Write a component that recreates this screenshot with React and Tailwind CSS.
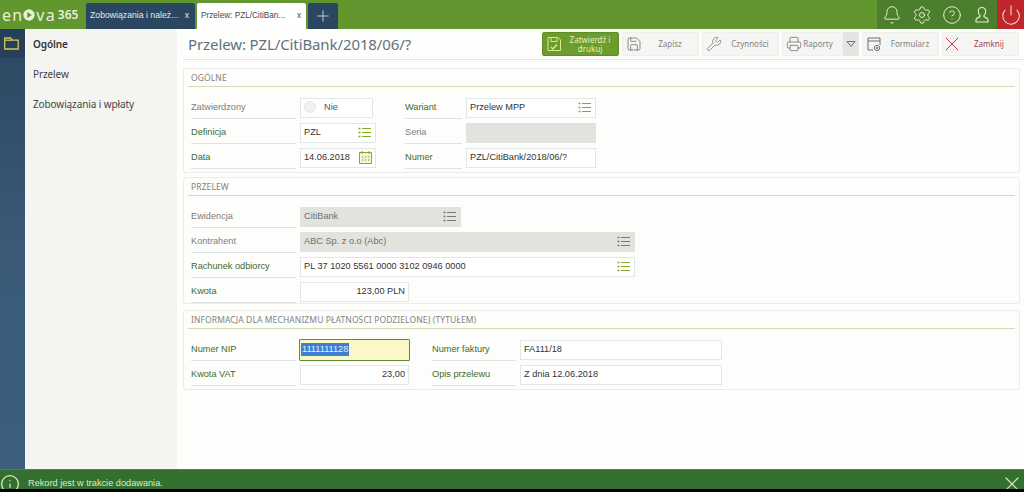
import React from 'react';
import { Bell, Settings, CircleHelp, Power, Plus, Save, Wrench, Printer, X, Info } from 'lucide-react';

const labelGreen = 'text-[#3d6b2c]';
const labelGray = 'text-[#7d7f7b]';

const ListIcon = ({ gray }) => (
    <svg width="13" height="11" viewBox="0 0 13 11" fill="none" stroke={gray ? '#777' : '#84a82a'} strokeWidth="1.2" className="shrink-0 mr-[1px]">
        <path d="M4 1.5h9M4 5.5h9M4 9.5h9" />
        <path d="M0.5 1.5h2M0.5 5.5h2M0.5 9.5h2" strokeWidth="1.6" />
    </svg>
);

const CalendarIcon = () => (
    <svg width="13" height="13" viewBox="0 0 13 13" fill="#f3f7dc" stroke="#84a82a" className="shrink-0">
        <path d="M0.5 1.5h12v11h-12z" />
        <path d="M3 0v3M10 0v3" />
        <path d="M3 6h1.5M6 6h1.5M9 6h1.5M3 9h1.5M6 9h1.5M9 9h1.5" />
    </svg>
);

const Field = ({ label, required, labelWidth = 'w-[105px]', inputWidth, tone = 'white', icon, right, children }) => (
    <>
        <div className={`${labelWidth} h-[23px] pt-[2px] border-b border-[#dbe3e6] flex items-center text-[9.2px] ${required ? labelGreen : labelGray}`}>
            {label}
        </div>
        <div className={`${inputWidth} ml-1 h-[20px] flex items-center justify-between px-[3px] text-[9.2px] border ${tone === 'gray' ? 'bg-[#e2e2df] border-[#e2e2df] text-[#6f716d]' : 'bg-white border-[#e1e7e6] text-[#333]'} ${right ? 'justify-end' : ''}`}>
            <span className="truncate">{children}</span>
            {icon === 'list' && <ListIcon gray={tone === 'gray'} />}
            {icon === 'calendar' && <CalendarIcon />}
        </div>
    </>
);

const Row = ({ children }) => <div className="h-[25px] flex items-center">{children}</div>;

const Section = ({ title, className, children }) => (
    <section className={`${className} mr-[4px] border border-[#ececea] rounded-[2px] bg-[#fdfdfb] px-[4px]`}>
        <div className="h-[18px] pt-[2px] border-b border-[#d3deb4] pl-[3px] flex items-center text-[8.5px] tracking-[0.1px] text-[#828480]" style={{ fontFamily: '"Noto Sans", sans-serif' }}>
            {title}
        </div>
        <div className="pt-[8px] pl-[3px]">{children}</div>
    </section>
);

const ToolButton = ({ icon, label, className = 'w-[77px] pl-[3px]', labelClass = 'text-[#808280]' }) => (
    <button className={`${className} h-[24px] bg-[#f5f5f3] border border-[#efefec] rounded-[2px] flex items-center`}>
        {icon}
        <span className={`flex-1 text-center text-[8px] ${labelClass}`}>{label}</span>
    </button>
);

const TopIcon = ({ children, className = 'w-[30px] bg-[#4b7f2d]' }) => (
    <div className={`${className} h-[29px] flex items-center justify-center text-[#e3efca]`}>{children}</div>
);

const FormIcon = () => (
    <svg width="16" height="16" viewBox="0 0 16 16" fill="none" stroke="#6b6e72" strokeWidth="1">
        <path d="M7 14H2V2h12v7" />
        <path d="M2 5h12" />
        <circle cx="11" cy="12" r="2.6" />
        <circle cx="11" cy="12" r="0.7" />
    </svg>
);

const ConfirmIcon = () => (
    <svg width="16" height="16" viewBox="0 0 16 16" fill="none" stroke="#dbe98a" strokeWidth="1">
        <path d="M2 1.5h10l2.5 2.5v10.5H2z" />
        <path d="M5 1.5v4h6v-4" />
        <path d="M5 11l2 2 4-4.5" strokeWidth="1.3" />
    </svg>
);

const FolderIcon = () => (
    <svg width="15" height="13" viewBox="0 0 15 13" fill="none" stroke="#d4c75a" strokeWidth="1.3">
        <path d="M0.7 12V1h6l1.5 2.2h6V12z" />
        <path d="M0.7 3.2h7.5" />
    </svg>
);

const UserIcon = () => (
    <svg width="18" height="18" viewBox="0 0 18 18" fill="none" stroke="currentColor" strokeWidth="1.1">
        <path d="M9 1.5c-2.4 0-3.7 1.7-3.7 4 0 1.7.7 3 1.7 3.9v1.4c-1.700.7-4 1.200-4 3.200v2h12v-2c0-2-2.300-2.500-4-3.200V9.400c1-.9 1.700-2.200 1.700-3.900 0-2.300-1.300-4-3.700-4z" />
    </svg>
);

const Logo = () => (
    <div className="w-[86px] pl-[2px] flex items-center text-[#e8f0d8] text-[16px] tracking-[1.2px]" style={{ fontFamily: '"Noto Sans", sans-serif' }}>
        <span>en</span>
        <svg width="12" height="12" viewBox="0 0 14 14" className="mr-[1px]">
            <circle cx="7" cy="7" r="6.6" fill="#e8f0d8" />
            <path d="M5 3.6L10.4 7 5 10.4z" fill="#5f9431" />
        </svg>
        <span>va</span>
        <span className="ml-[2px] text-[12px] font-semibold tracking-normal">365</span>
    </div>
);

export default function App() {
    return (
        <div className="h-screen w-full overflow-hidden flex flex-col bg-black" style={{ fontFamily: '"Liberation Sans", Arial, sans-serif' }}>
            {/* Top bar */}
            <header className="h-[29px] shrink-0 bg-[#62962f] flex items-end">
                <div className="h-[29px] flex items-center"><Logo /></div>
                <div className="w-[109px] h-[26px] bg-[#2b4660] rounded-t-[2px] flex items-center justify-between pl-[4px] pr-[6px] text-[8.7px] text-[#e4e9ee]">
                    <span>Zobowiązania i należ...</span><span>x</span>
                </div>
                <div className="ml-[2px] w-[109px] h-[26px] bg-white rounded-t-[2px] flex items-center justify-between pl-[4px] pr-[5px] text-[8.2px] text-[#3d4a55]">
                    <span>Przelew: PZL/CitiBan...</span><span>x</span>
                </div>
                <div className="ml-[2px] w-[30px] h-[26px] bg-[#2b4660] rounded-t-[2px] flex items-center justify-center text-[#cdd6de]">
                    <Plus size={18} strokeWidth={1.2} />
                </div>
                <div className="ml-auto flex">
                    <TopIcon><Bell size={20} strokeWidth={1.2} /></TopIcon>
                    <TopIcon><Settings size={20} strokeWidth={1.2} /></TopIcon>
                    <TopIcon><CircleHelp size={20} strokeWidth={1.2} /></TopIcon>
                    <TopIcon><UserIcon /></TopIcon>
                    <TopIcon className="w-[27px] bg-[#c0252b]"><Power size={22} strokeWidth={1.1} /></TopIcon>
                </div>
            </header>

            <div className="flex-1 min-h-0 flex">
                {/* Icon rail */}
                <div className="w-[25px] shrink-0 bg-gradient-to-b from-[#2c4761] via-[#3a5a78] to-[#3c5f7d]">
                    <div className="h-[29px] bg-[#27405a] flex items-center justify-center pr-[3px]">
                        <FolderIcon />
                    </div>
                </div>

                {/* Menu */}
                <nav className="w-[152px] shrink-0 bg-[#f4f4f1] pl-[8px] text-[10px] tracking-[-0.1px] text-[#444]" style={{ fontFamily: '"Noto Sans", sans-serif' }}>
                    <div className="h-[30px] flex items-center font-semibold text-[#333]">Ogólne</div>
                    <div className="h-[30px] flex items-center">Przelew</div>
                    <div className="h-[30px] flex items-center">Zobowiązania i wpłaty</div>
                </nav>

                {/* Form */}
                <main className="flex-1 bg-[#fefefc] pl-[6px]">
                    <div className="h-[31px] border-b border-[#e4e4e1] flex items-center justify-between pr-[5px]">
                        <h1 className="pl-[5px] text-[15px] tracking-[-0.1px] text-[#5f7280]" style={{ fontFamily: '"Noto Sans", sans-serif' }}>Przelew: PZL/CitiBank/2018/06/?</h1>
                        <div className="flex items-center gap-[3px]" style={{ fontFamily: '"Noto Sans", sans-serif' }}>
                            <button className="w-[77px] h-[24px] bg-[#6c9c2c] border border-[#5d8c28] rounded-[2px] flex items-center pl-[3px]">
                                <ConfirmIcon />
                                <span className="flex-1 text-center text-[8px] leading-[9px] text-[#e6f0b8]">Zatwierdź i drukuj</span>
                            </button>
                            <ToolButton icon={<Save size={16} strokeWidth={1} className="text-[#555]" />} label="Zapisz" />
                            <ToolButton icon={<Wrench size={16} strokeWidth={1} className="text-[#666]" />} label="Czynności" />
                            <div className="flex">
                                <ToolButton className="w-[61px] pl-[3px]" icon={<Printer size={16} strokeWidth={1.1} className="text-[#666]" />} label="Raporty" labelClass="text-[#808280] pr-[8px]" />
                                <div className="w-[16px] h-[24px] bg-[#e4e5e3] flex items-center justify-center">
                                    <svg width="10" height="8" viewBox="0 0 10 8" fill="none" stroke="#6b7276"><path d="M1 1.500h8L5 6.500z" /></svg>
                                </div>
                            </div>
                            <ToolButton icon={<FormIcon />} label="Formularz" />
                            <ToolButton className="w-[77px]" icon={<X size={24} strokeWidth={1} className="text-[#c8323a] -ml-[3px]" />} label="Zamknij" labelClass="text-[#a8444a] pr-[4px]" />
                        </div>
                    </div>

                    <Section title="OGÓLNE" className="mt-[8px] h-[105px]">
                        <Row>
                            <Field label="Zatwierdzony" inputWidth="w-[73px]">
                                <span className="flex items-center gap-[8px] text-[#555]">
                                    <span className="w-[12px] h-[12px] rounded-full bg-[#f1f1ef] border border-[#e6e6e4]" />Nie
                                </span>
                            </Field>
                            <div className="w-[32px]" />
                            <Field label="Wariant" required labelWidth="w-[57px]" inputWidth="w-[130px]" icon="list">Przelew MPP</Field>
                        </Row>
                        <Row>
                            <Field label="Definicja" required inputWidth="w-[76px]" icon="list">PZL</Field>
                            <div className="w-[29px]" />
                            <Field label="Seria" labelWidth="w-[57px]" inputWidth="w-[130px]" tone="gray" />
                        </Row>
                        <Row>
                            <Field label="Data" required inputWidth="w-[76px]" icon="calendar">14.06.2018</Field>
                            <div className="w-[29px]" />
                            <Field label="Numer" required labelWidth="w-[57px]" inputWidth="w-[130px]">PZL/CitiBank/2018/06/?</Field>
                        </Row>
                    </Section>

                    <Section title="PRZELEW" className="mt-[4px] h-[127px]">
                        <Row><Field label="Ewidencja" inputWidth="w-[161px]" tone="gray" icon="list">CitiBank</Field></Row>
                        <Row><Field label="Kontrahent" inputWidth="w-[335px]" tone="gray" icon="list">ABC Sp. z o.o (Abc)</Field></Row>
                        <Row><Field label="Rachunek odbiorcy" required inputWidth="w-[335px]" icon="list">PL 37 1020 5561 0000 3102 0946 0000</Field></Row>
                        <Row><Field label="Kwota" required inputWidth="w-[109px]" right>123,00 PLN</Field></Row>
                    </Section>

                    <Section title="INFORMACJA DLA MECHANIZMU PŁATNOŚCI PODZIELONEJ (TYTUŁEM)" className="mt-[6px] h-[80px]">
                        <Row>
                            <div className="w-[105px] h-[23px] pt-[2px] border-b border-[#dbe3e6] flex items-center text-[9.2px] text-[#3d6b2c]">Numer NIP</div>
                            <div className="ml-[3px] w-[111px] h-[22px] flex items-center px-[1px] text-[9.2px] bg-[#fbf7c6] border border-[#5f8a3a] rounded-[1px]">
                                <span className="bg-[#3d7fd1] text-[#e8f0fa] px-[1px]">1111111128</span>
                            </div>
                            <div className="w-[22px]" />
                            <Field label="Numer faktury" required labelWidth="w-[84px]" inputWidth="w-[202px]">FA111/18</Field>
                        </Row>
                        <Row>
                            <Field label="Kwota VAT" required inputWidth="w-[109px]" right>23,00</Field>
                            <div className="w-[23px]" />
                            <Field label="Opis przelewu" required labelWidth="w-[84px]" inputWidth="w-[202px]">Z dnia 12.06.2018</Field>
                        </Row>
                    </Section>
                </main>
            </div>

            {/* Status bar */}
            <footer className="h-[20px] mb-[3px] shrink-0 bg-[#33702f] border-t border-[#4d8644] flex items-center overflow-hidden text-[#dcecc8]">
                <Info size={20} strokeWidth={1.5} className="mt-[8px] shrink-0" />
                <span className="ml-[8px] mt-[9px] text-[9.2px]">Rekord jest w trakcie dodawania.</span>
                <X size={24} strokeWidth={1.1} className="ml-auto mt-[9px]" />
            </footer>
        </div>
    );
}
